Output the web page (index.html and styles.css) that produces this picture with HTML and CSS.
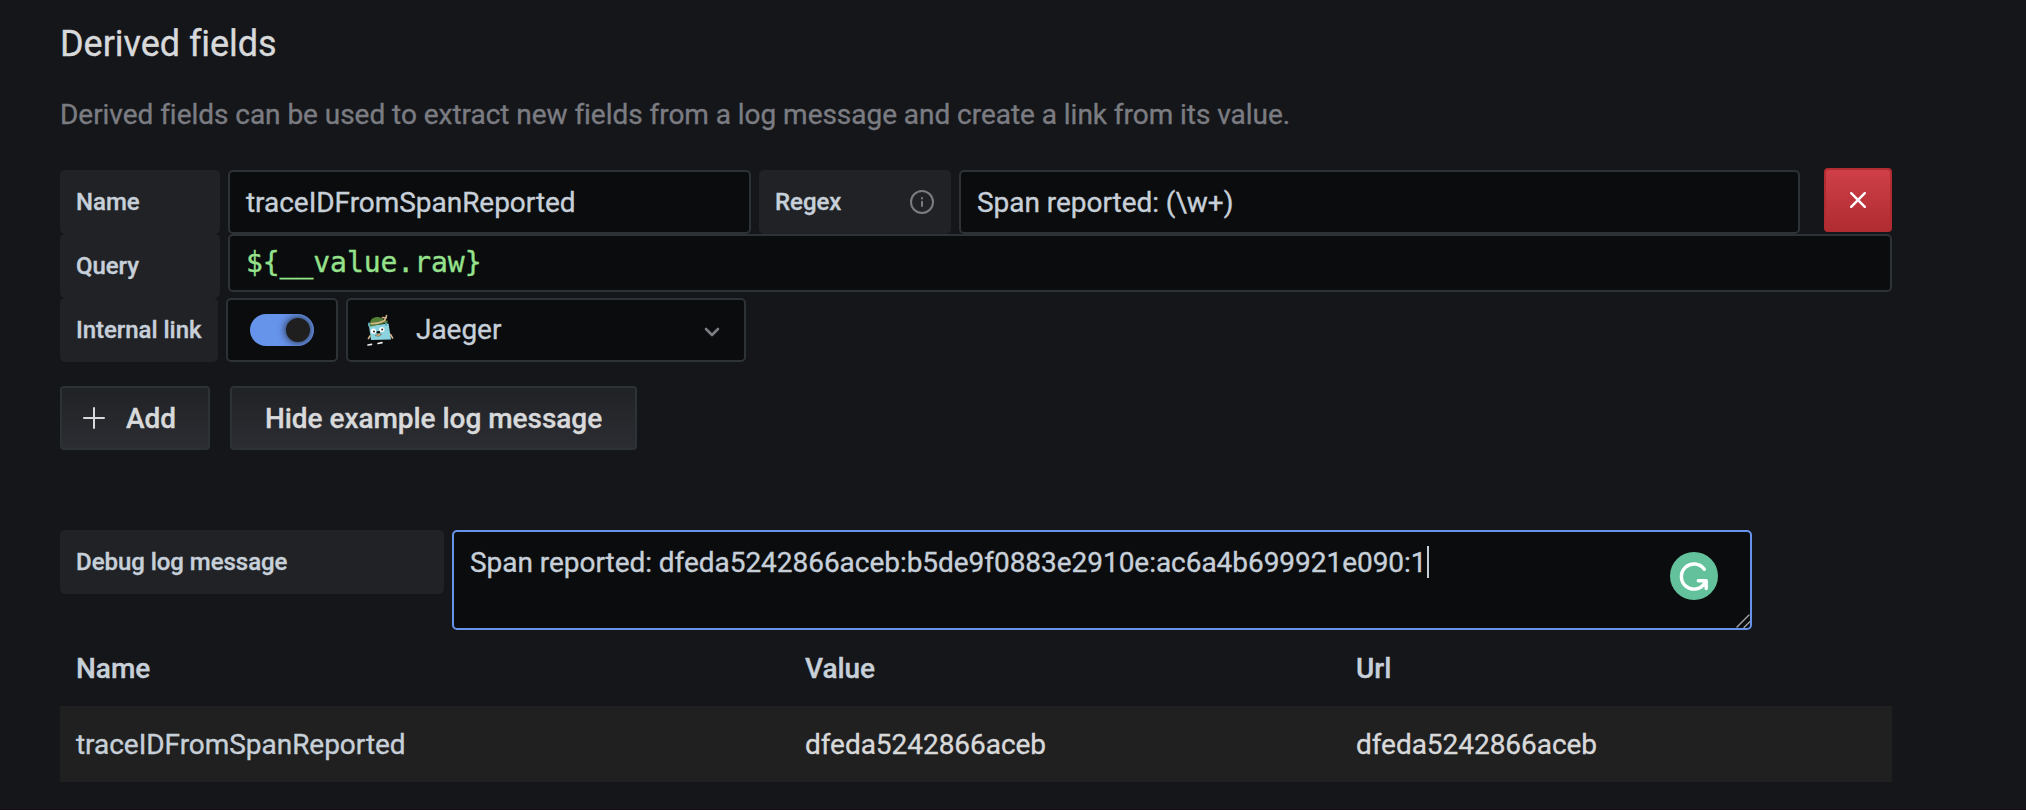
FILE: index.html
```html
<!DOCTYPE html>
<html lang="en">
<head>
<meta charset="utf-8">
<title>Derived fields</title>
<link rel="stylesheet" href="styles.css">
</head>
<body>
<main class="settings">
  <h3 class="title">Derived fields</h3>
  <p class="intro">Derived fields can be used to extract new fields from a log message and create a link from its value.</p>

  <section class="fields">
    <div class="row">
      <label class="label label-md">Name</label>
      <div class="control control-name">traceIDFromSpanReported</div>
      <label class="label label-regex">Regex
        <svg class="info" viewBox="0 0 24 24"><circle cx="12" cy="12" r="11"/><path d="M12 11.7v4.3M12 8v.6"/></svg>
      </label>
      <div class="control control-regex">Span reported: (\w+)</div>
      <button class="remove" aria-label="Remove"><svg viewBox="0 0 16 16"><path d="M1.2 1.2l13.6 13.6M14.8 1.2L1.2 14.8"/></svg></button>
    </div>
    <div class="row">
      <label class="label label-md">Query</label>
      <div class="control control-query">${__value.raw}</div>
    </div>
    <div class="row">
      <label class="label label-link">Internal link</label>
      <div class="control control-switch"><span class="switch"><span class="knob"></span></span></div>
      <div class="control control-select">
        <svg class="gopher" viewBox="0 0 28 32">
          <path class="body" d="M3 12L22.5 9.5L25 25.5L5 26Z"/>
          <path class="arm" d="M4 22L2.4 24.6M24.5 20.5L26.6 24M17.5 8L20 3.5M16.5 3.5L20 4L20.5 1.5"/>
          <path class="hat" d="M4 9.5C4 1.500 16 1 18.500 7L22 6.500L21.500 8.500L5 12.500L2 12Z"/>
          <path class="band" d="M5 9.800Q13 9.500 19 6.500"/>
          <path class="ear" d="M3 9.500v2M20 9.500v1.500"/>
          <circle class="eye" cx="7.500" cy="17.200" r="2.600"/><circle class="eye" cx="15.800" cy="15.500" r="2.600"/>
          <circle class="pupil" cx="8" cy="17.400" r="1"/><circle class="pupil" cx="16.200" cy="15.500" r="1"/>
          <path class="nose" d="M11.500 18.400l1.600-.3"/>
          <path class="mouth" d="M9.500 21.400l2.600-1.600 3.600.4-2.600 2z"/>
          <path class="shoe" d="M2 31l3.500-.6M12 29.500l4-.9"/>
        </svg>
        <span>Jaeger</span>
        <svg class="chevron" viewBox="0 0 16 10"><path d="M2 2l6 6 6-6"/></svg>
      </div>
    </div>
  </section>

  <div class="actions">
    <button class="btn btn-add"><svg viewBox="0 0 22 22"><path d="M11 1v20M1 11h20"/></svg><span>Add</span></button>
    <button class="btn btn-hide"><span>Hide example log message</span></button>
  </div>

  <div class="row debug">
    <label class="label label-debug">Debug log message</label>
    <div class="control control-debug">
      <span class="debug-text">Span reported: dfeda5242866aceb:b5de9f0883e2910e:ac6a4b699921e090:1</span><span class="caret"></span>
      <svg class="grammarly" viewBox="0 0 48 48"><circle cx="24" cy="24" r="24"/><path d="M34.3 17.3A12.6 12.6 0 1 0 34.5 31.5M28.3 28.8H36.2V36.5"/></svg>
      <svg class="grip" viewBox="0 0 14 14"><path d="M1 13L13 1M8 13.5L13.8 7.8"/></svg>
    </div>
  </div>

  <table class="results">
    <thead><tr><th>Name</th><th>Value</th><th>Url</th></tr></thead>
    <tbody><tr><td>traceIDFromSpanReported</td><td class="val">dfeda5242866aceb</td><td class="val">dfeda5242866aceb</td></tr></tbody>
  </table>
</main>
</body>
</html>
```

FILE: styles.css
```css
* { box-sizing: border-box; }
body {
  margin: 0;
  height: 810px;
  overflow: hidden;
  border-bottom: 1px solid #130c14;
  background: #15161a;
  color: #c7d0d9;
  font: 400 28px/42px Roboto, "Liberation Sans", sans-serif;
  letter-spacing: -0.04px;
  -webkit-text-stroke: 0.35px currentColor;
}
svg { fill: none; flex: none; display: block; stroke-linecap: round; stroke-linejoin: round; }
button { font: inherit; letter-spacing: inherit; }

.settings { width: 1892px; padding: 23px 0 0 60px; }
.title { margin: 0; font-size: 36px; font-weight: 400; line-height: 43px; color: #d8d9da; }
.intro { margin: 28px 0 0; color: #7b7c82; }
.fields { margin-top: 34px; }

.row { display: flex; align-items: flex-start; gap: 8px; }
.label {
  display: flex;
  align-items: center;
  justify-content: space-between;
  height: 64px;
  padding: 0 16px;
  border-radius: 5px;
  background: #202226;
  font-size: 24px;
  font-weight: 500;
  white-space: nowrap;
}
.label-md { width: 160px; }
.label-regex { width: 192px; }
.label-link { width: 158px; }
.label-debug { width: 384px; }
.info { width: 24px; height: 24px; margin-right: 1px; stroke: #7b7c82; stroke-width: 2; }

.control {
  display: flex;
  align-items: center;
  height: 64px;
  padding: 0 16px;
  border: 2px solid #2c3235;
  border-radius: 5px;
  background: #0b0c0e;
  white-space: nowrap;
}
.control-name { width: 523px; padding-top: 2px; }
.control-regex { width: 841px; padding-top: 2px; }
.control-query {
  flex: 1;
  height: 58px;
  padding-bottom: 1px;
  color: #96e28c;
  font-family: "DejaVu Sans Mono", monospace;
}
.control-switch { width: 112px; padding: 0 22px; }
.control-select { width: 400px; padding: 0 24px 0 18px; }
.gopher { width: 28px; height: 32px; margin-right: 22px; }
.chevron { width: 16px; height: 10px; margin: 4px 0 0 auto; stroke: #7b7c82; stroke-width: 2.6; }

.switch { display: flex; justify-content: flex-end; width: 64px; height: 32px; padding: 4px; border-radius: 16px; background: #6794eb; overflow: hidden; }
.knob { width: 24px; height: 24px; border-radius: 50%; background: #1f1f20; box-shadow: 0 0 8px #161719; }

.remove {
  display: flex;
  align-items: center;
  justify-content: center;
  width: 68px;
  height: 64px;
  margin: -2px 0 0 auto;
  padding: 0;
  border: 2px solid #b02c31;
  border-radius: 4px;
  background: linear-gradient(#cf3f48, #b02c31);
}
.remove svg { width: 16px; height: 16px; stroke: #fff; stroke-width: 2.4; }

.body { fill: #8bd3de; }
.hat { fill: #557f35; }
.arm { stroke: #d6b48b; stroke-width: 1.6; }
.band { stroke: #d6b48b; stroke-width: 1.4; }
.ear { stroke: #5aa9bd; stroke-width: 2; }
.eye { fill: #fff; }
.pupil { fill: #222; }
.nose { stroke: #111; stroke-width: 2.2; }
.mouth { fill: #d2ab7c; stroke: #6b5137; stroke-width: .5; }
.shoe { stroke: #eee; stroke-width: 1.6; }

.actions { display: flex; gap: 20px; margin-top: 24px; }
.btn {
  display: flex;
  align-items: center;
  height: 64px;
  border: 2px solid #2c3235;
  border-radius: 4px;
  background: linear-gradient(#202226, #2c2d32);
  color: #d8d9da;
  font-weight: 500;
  white-space: nowrap;
}
.btn span { padding-top: 2px; }
.btn-add { width: 150px; padding: 0 0 0 21px; }
.btn-add svg { width: 22px; height: 22px; margin-right: 21px; stroke: #d8d9da; stroke-width: 2; }
.btn-hide { width: 407px; justify-content: center; padding: 0; }

.debug { margin-top: 80px; }
.control-debug { position: relative; width: 1300px; height: 100px; align-items: flex-start; padding-top: 10px; border-color: #6794eb; }
.caret { width: 2px; height: 32px; margin: 4px 0 0 1px; background: #c7d0d9; }
.grammarly { position: absolute; left: 1216px; top: 20px; width: 48px; height: 48px; stroke: #fff; stroke-width: 3.4; }
.grammarly circle { fill: #63c19c; stroke: none; }
.grip { position: absolute; right: 0; bottom: 0; width: 14px; height: 14px; stroke: #a5a6a7; stroke-width: 1.4; }

.results { width: 1832px; border-collapse: collapse; table-layout: fixed; }
.results th, .results td { height: 76px; padding: 2px 0 0 16px; text-align: left; }
.results th { font-weight: 500; }
.results th:nth-child(1) { width: 729px; }
.results th:nth-child(2) { width: 551px; }
.results tbody tr { background: #202020; }
.val { color: #d8d9da; }
```
